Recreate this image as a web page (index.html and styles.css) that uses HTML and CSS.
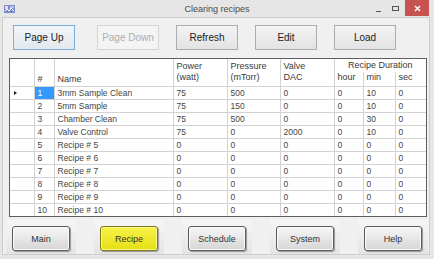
FILE: index.html
```html
<!DOCTYPE html>
<html lang="en">
<head>
    <meta charset="UTF-8">
    <title>Clearing recipes</title>
    <link rel="stylesheet" href="styles.css">
</head>
<body>
<div class="window">
    <div class="titlebar">
        <div class="tb-left">
            <svg class="app-icon" width="11" height="8" viewBox="0 0 11 8">
                <rect x="0" y="0" width="11" height="8" fill="#7d8cc8"/>
                <rect x="1" y="1" width="3" height="3" fill="#d8dcf0"/>
                <rect x="6" y="1" width="4" height="2" fill="#b9c0e4"/>
                <path d="M1 6 L3 4 L5 6 L7 3 L10 6" stroke="#ffffff" stroke-width="1" fill="none"/>
            </svg>
        </div>
        <span class="title">Clearing recipes</span>
        <div class="tb-right">
            <span class="ctl ctl-min"></span>
            <span class="ctl ctl-max"></span>
            <span class="ctl-close">
                <svg width="7" height="7" viewBox="0 0 7 7"><path d="M1 1 L6 6 M6 1 L1 6" stroke="#fff" stroke-width="1.4"/></svg>
            </span>
        </div>
    </div>

    <div class="client">
        <div class="toolbar">
            <button class="btn focused">Page Up</button>
            <button class="btn" disabled>Page Down</button>
            <button class="btn">Refresh</button>
            <button class="btn">Edit</button>
            <button class="btn">Load</button>
        </div>

        <div class="grid">
            <table>
                <colgroup>
                    <col style="width:24px"><col style="width:20px"><col style="width:119px">
                    <col style="width:54px"><col style="width:53px"><col style="width:54px">
                    <col style="width:29px"><col style="width:32px"><col style="width:31px">
                </colgroup>
                <thead>
                    <tr class="h1">
                        <th rowspan="2"></th>
                        <th rowspan="2" class="bottom">#</th>
                        <th rowspan="2" class="bottom">Name</th>
                        <th rowspan="2">Power<br>(watt)</th>
                        <th rowspan="2">Pressure<br>(mTorr)</th>
                        <th rowspan="2">Valve<br>DAC</th>
                        <th colspan="3" class="span">Recipe Duration</th>
                    </tr>
                    <tr class="h2">
                        <th class="sub">hour</th>
                        <th class="sub">min</th>
                        <th class="sub">sec</th>
                    </tr>
                </thead>
                <tbody>
                    <tr><td class="rh"><span class="marker"></span></td><td class="sel">1</td><td>3mm Sample Clean</td><td>75</td><td>500</td><td>0</td><td>0</td><td>10</td><td>0</td></tr>
                    <tr><td class="rh"></td><td>2</td><td>5mm Sample</td><td>75</td><td>150</td><td>0</td><td>0</td><td>10</td><td>0</td></tr>
                    <tr><td class="rh"></td><td>3</td><td>Chamber Clean</td><td>75</td><td>500</td><td>0</td><td>0</td><td>30</td><td>0</td></tr>
                    <tr><td class="rh"></td><td>4</td><td>Valve Control</td><td>75</td><td>0</td><td>2000</td><td>0</td><td>10</td><td>0</td></tr>
                    <tr><td class="rh"></td><td>5</td><td>Recipe # 5</td><td>0</td><td>0</td><td>0</td><td>0</td><td>0</td><td>0</td></tr>
                    <tr><td class="rh"></td><td>6</td><td>Recipe # 6</td><td>0</td><td>0</td><td>0</td><td>0</td><td>0</td><td>0</td></tr>
                    <tr><td class="rh"></td><td>7</td><td>Recipe # 7</td><td>0</td><td>0</td><td>0</td><td>0</td><td>0</td><td>0</td></tr>
                    <tr><td class="rh"></td><td>8</td><td>Recipe # 8</td><td>0</td><td>0</td><td>0</td><td>0</td><td>0</td><td>0</td></tr>
                    <tr><td class="rh"></td><td>9</td><td>Recipe # 9</td><td>0</td><td>0</td><td>0</td><td>0</td><td>0</td><td>0</td></tr>
                    <tr><td class="rh"></td><td>10</td><td>Recipe # 10</td><td>0</td><td>0</td><td>0</td><td>0</td><td>0</td><td>0</td></tr>
                </tbody>
            </table>
        </div>

        <div class="nav">
            <div class="nav-slot"><button class="nav-btn">Main</button></div>
            <div class="nav-slot"><button class="nav-btn active">Recipe</button></div>
            <div class="nav-slot"><button class="nav-btn">Schedule</button></div>
            <div class="nav-slot"><button class="nav-btn">System</button></div>
            <div class="nav-slot"><button class="nav-btn">Help</button></div>
        </div>
    </div>
</div>
</body>
</html>
```

FILE: styles.css
```css
html, body {
    margin: 0;
    padding: 0;
}

body {
    width: 434px;
    height: 259px;
    overflow: hidden;
    background-color: #e6e6e6;
    font-family: "Liberation Sans", Arial, sans-serif;
    color: #333;
}

.window {
    height: 259px;
    display: flex;
    flex-direction: column;
}

/* title bar */
.titlebar {
    height: 17px;
    flex: none;
    display: grid;
    grid-template-columns: 1fr auto 1fr;
    align-items: center;
}

.tb-left {
    padding-left: 4px;
    display: flex;
    align-items: center;
}

.app-icon {
    display: block;
}

.title {
    font-size: 9px;
    color: #4a4a4a;
}

.tb-right {
    display: flex;
    justify-content: flex-end;
    align-items: center;
    height: 17px;
    padding-right: 5px;
}

.ctl {
    display: block;
    box-sizing: border-box;
}

.ctl-min {
    width: 5px;
    height: 1px;
    background: #555;
    margin-top: 5px;
    margin-right: 11px;
}

.ctl-max {
    width: 7px;
    height: 5px;
    border: 1px solid #555;
    margin-right: 6px;
}

.ctl-close {
    width: 24px;
    height: 16px;
    background-color: #c75252;
    display: flex;
    align-items: center;
    justify-content: center;
    align-self: flex-start;
}

/* client area */
.client {
    flex: 1;
    margin: 0 4px 4px 2px;
    border: 1px solid #cdcdcd;
    background-color: #f0f0f0;
    display: flex;
    flex-direction: column;
}

.toolbar {
    display: flex;
    gap: 17px;
    padding: 7px 0 0 10px;
}

.btn {
    width: 62px;
    height: 25px;
    box-sizing: border-box;
    border: 1px solid #acacac;
    background: linear-gradient(#f3f3f3, #e3e3e3);
    font-family: "Liberation Sans", Arial, sans-serif;
    font-size: 10px;
    color: #222;
    padding: 0;
}

.btn.focused {
    border-color: #7aaedc;
    background: linear-gradient(#f2f6fa, #e3e8ee);
    margin-right: 5px;
}

.btn:disabled {
    border-color: #d5d5d5;
    background: #f4f4f4;
    color: #adadad;
}

/* grid */
.grid {
    margin: 8px 0 0 6px;
    width: 416px;
    border: 1px solid #5e5e5e;
    background: #fff;
}

table {
    width: 416px;
    table-layout: fixed;
    border-collapse: collapse;
    border-style: hidden;
}

th, td {
    border: 1px solid #d2d2d2;
    padding: 0 0 0 3px;
    text-align: left;
    white-space: nowrap;
    overflow: hidden;
}

th {
    font-size: 9px;
    font-weight: normal;
    color: #3a3a3a;
    line-height: 11px;
    vertical-align: middle;
}

th.bottom {
    vertical-align: bottom;
    padding-bottom: 1px;
}

tr.h1 {
    height: 13px;
}

tr.h2 {
    height: 14px;
}

th.span {
    text-align: center;
    border-bottom-style: hidden;
    padding-left: 0;
}

th.sub {
    vertical-align: top;
}

td {
    font-size: 8.5px;
    line-height: 12px;
    color: #444;
}

tbody tr {
    height: 13px;
}

td.rh {
    position: relative;
}

.marker {
    position: absolute;
    left: 4px;
    top: 4px;
    width: 0;
    height: 0;
    border-top: 2px solid transparent;
    border-bottom: 2px solid transparent;
    border-left: 3px solid #222;
}

td.sel {
    background-color: #3399ff;
    color: #fff;
}

/* bottom navigation */
.nav {
    display: flex;
    gap: 18px;
    margin-top: 3px;
    padding-left: 3px;
}

.nav-slot {
    padding: 6px 6px 3px 6px;
    background: linear-gradient(#f6f6f6, #e4e4e4);
}

.nav-btn {
    display: block;
    width: 58px;
    height: 25px;
    box-sizing: border-box;
    border: 1px solid #5c5c5c;
    border-radius: 3px;
    background: linear-gradient(#f7f7f7, #d6d6d6);
    box-shadow: inset 0 0 0 1px #fafafa, 1px 1px 1px #9a9a9a;
    font-family: "Liberation Sans", Arial, sans-serif;
    font-size: 9px;
    color: #333;
    padding: 0;
}

.nav-btn.active {
    border-color: #7d7a16;
    background: linear-gradient(#f7f24a, #e6df12);
    box-shadow: inset 0 0 0 1px #faf690, 1px 1px 1px #9a9a9a;
}
```
